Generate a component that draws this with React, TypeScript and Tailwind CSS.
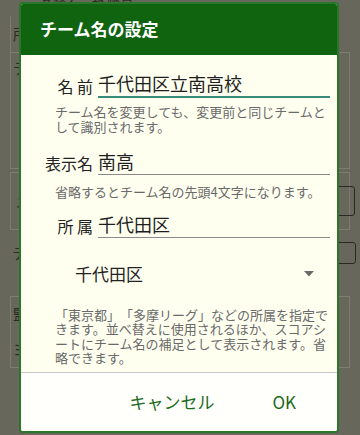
import React from "react";

const font = { fontFamily: '"Noto Sans CJK JP", "Noto Sans", sans-serif' };

function Background() {
  return (
    <div className="w-[360px] h-[435px] bg-[#67675b] overflow-hidden flex flex-col text-[#2a2a24]" style={font}>
      <div className="h-[10px] flex items-end pl-[40px] text-[13px] leading-[14px] -mt-[6px]">登録チーム 練習</div>
      <div className="mt-[12px] mx-[10px] h-[36px] border-l border-[#7d7d70] flex items-center pl-[2px] text-[15px]">所</div>
      <div className="mx-[10px] h-[117px] border border-[#7d7d70] pl-[2px] pt-[4px] text-[15px]">テ</div>
      <div className="mx-[10px] mt-[3px] h-[58px] border border-[#7d7d70] flex items-center justify-between pl-[4px] text-[15px]">
        <span>メ</span>
        <span className="w-[24px] h-[30px] border border-[#2a2a24] rounded-[3px] mr-[-6px]" />
      </div>
      <div className="mx-[10px] mt-[8px] h-[30px] flex items-center justify-between pl-[2px] text-[15px]">
        <span>テ</span>
        <span className="w-[24px] h-[22px] border border-[#2a2a24] rounded-[3px] mr-[-6px]" />
      </div>
      <div className="mx-[10px] mt-[28px] h-[72px] border border-[#7d7d70] flex flex-col justify-around pl-[2px] text-[15px]">
        <span>監</span>
        <span>ヨ</span>
      </div>
    </div>
  );
}

function Field({ label, value, focused }: { label: string; value: string; focused?: boolean }) {
  return (
    <div className="flex items-end">
      <div className="w-[72px] text-right text-[16px] leading-[24px] text-[#222] whitespace-pre">{label}</div>
      <div
        className={
          focused
            ? "ml-[5px] flex-1 text-[18px] leading-[24px] pt-[2px] pb-[1px] border-b-2 border-[#3a8a7c] text-[#1e1e1e]"
            : "ml-[5px] flex-1 text-[18px] leading-[24px] pb-[1px] border-b border-[#8a8a8a] text-[#1e1e1e]"
        }
      >
        {value}
      </div>
    </div>
  );
}

function Hint({ lines, className }: { lines: string[]; className?: string }) {
  return (
    <div className={"pl-[34px] text-[13px] leading-[14.5px] text-[#6a6a6a] whitespace-nowrap [text-spacing-trim:space-all] " + (className ?? "")}>
      {lines.map((l, i) => (
        <div key={i}>{l}</div>
      ))}
    </div>
  );
}

export default function App() {
  return (
    <div className="relative w-[360px] h-[435px] overflow-hidden [text-spacing-trim:space-all]" style={font}>
      <Background />
      <div className="absolute left-[19px] top-[2px] w-[320px] h-[431px] rounded-[4px] border-2 border-[#2a762a] overflow-hidden flex flex-col bg-[#fffffb]">
        <div className="h-[51px] shrink-0 bg-[#106410] flex items-center pl-[19px] pb-[2px] text-white text-[17px] font-bold">
          チーム名の設定
        </div>
        <div className="h-[317px] shrink-0 bg-[#fffff0] pr-[7px] pt-[14px] flex flex-col">
          <Field label="名 前" value="千代田区立南高校" focused />
          <Hint className="mt-[7px]" lines={["チーム名を変更しても、変更前と同じチームと", "して識別されます。"]} />
          <div className="mt-[15px]">
            <Field label="表示名" value="南高" />
          </div>
          <Hint className="mt-[10px]" lines={["省略するとチーム名の先頭4文字になります。"]} />
          <div className="mt-[12px]">
            <Field label="所 属" value="千代田区" />
          </div>
          <div className="mt-[16px] h-[40px] flex items-center justify-between pl-[54px] pr-[16px]">
            <span className="text-[17px] text-[#222]">千代田区</span>
            <svg width="10" height="6" viewBox="0 0 10 6">
              <path d="M0 0 L10 0 L5 5.5 Z" fill="#6a6a6a" />
            </svg>
          </div>
          <Hint
            className="mt-[14px]"
            lines={[
              "「東京都」「多摩リーグ」などの所属を指定で",
              "きます。並べ替えに使用されるほか、スコアシ",
              "ートにチーム名の補足として表示されます。省",
              "略できます。",
            ]}
          />
        </div>
        <div className="flex-1 border-t border-[#cacaca] bg-[#fffffb] flex items-center justify-end pr-[41px] pb-[1px] text-[17px] text-[#1c6a1c] font-normal">
          <span>キャンセル</span>
          <span className="ml-[58px]">OK</span>
        </div>
      </div>
    </div>
  );
}
